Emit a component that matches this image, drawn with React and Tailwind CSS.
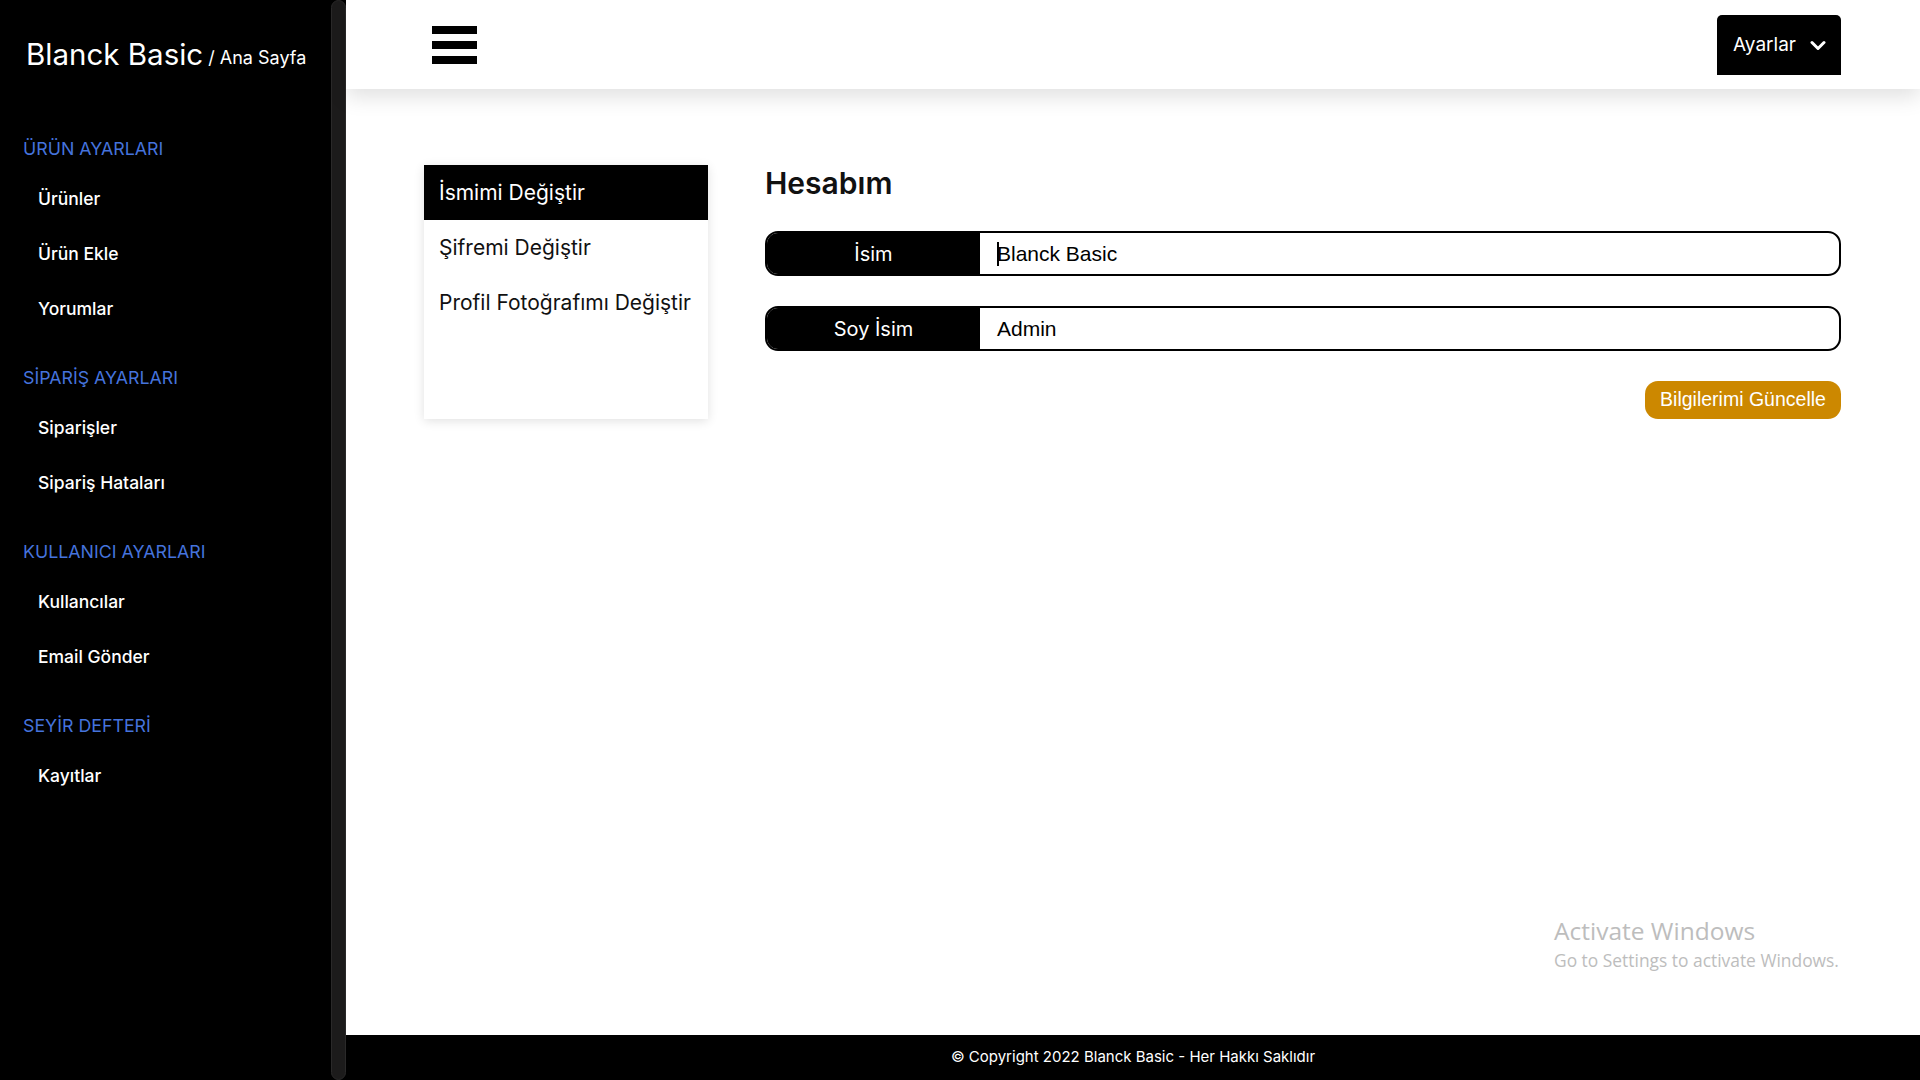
import React from "react";

const menu = [
  { title: "ÜRÜN AYARLARI", items: ["Ürünler", "Ürün Ekle", "Yorumlar"] },
  { title: "SİPARİŞ AYARLARI", items: ["Siparişler", "Sipariş Hataları"] },
  { title: "KULLANICI AYARLARI", items: ["Kullancılar", "Email Gönder"] },
  { title: "SEYİR DEFTERİ", items: ["Kayıtlar"] },
];

const tabs = ["İsmimi Değiştir", "Şifremi Değiştir", "Profil Fotoğrafımı Değiştir"];

const Sidebar = () => (
  <aside className="flex h-full w-[346px] shrink-0 bg-black">
    <div className="flex w-[331px] flex-col">
      <div className="flex h-[89px] items-center pl-[26px] pt-[20px] text-white">
        <span className="text-[29.5px] leading-none">Blanck Basic</span>
        <span className="ml-[5px] mt-[6px] text-[18px] leading-none">/ Ana Sayfa</span>
      </div>
      <nav className="mt-[37px] flex flex-col">
        {menu.map((group) => (
          <div key={group.title} className="mb-[18px]">
            <div className="flex h-[46px] items-center pl-[23px] text-[17.8px] text-[#4573dc]">
              {group.title}
            </div>
            {group.items.map((item) => (
              <div
                key={item}
                className="flex h-[55px] items-center pl-[38px] text-[17.5px] font-medium text-white"
              >
                {item}
              </div>
            ))}
          </div>
        ))}
      </nav>
    </div>
    <div className="h-full w-[15px] rounded-full border border-[#2a2929] bg-[#1c1b1b]" />
  </aside>
);

const Header = () => (
  <header className="relative z-10 flex h-[89px] shrink-0 items-center justify-between bg-white pl-[86px] pr-[79px] shadow-[0_8px_20px_rgba(0,0,0,0.12)]">
    <div className="flex w-[45px] flex-col gap-[7px]">
      <span className="h-[8px] bg-black" />
      <span className="h-[8px] bg-black" />
      <span className="h-[8px] bg-black" />
    </div>
    <button className="mt-[1px] flex h-[60px] w-[124px] items-center gap-[14px] rounded-t-[5px] bg-black pl-[16px] text-[19px] text-white">
      <span>Ayarlar</span>
      <svg width="16" height="11" viewBox="0 0 16 11" fill="none">
        <path d="M2 2.5 8 8.5 14 2.5" stroke="white" strokeWidth="3" strokeLinecap="round" strokeLinejoin="round" />
      </svg>
    </button>
  </header>
);

const Field = ({ label, value, caret }) => (
  <div className="flex h-[45px] overflow-hidden rounded-[13px] border-2 border-black">
    <div className="flex w-[213px] shrink-0 items-center justify-center bg-black text-[20px] text-white">
      {label}
    </div>
    <div className="flex flex-1 items-center pl-[17px] font-['Liberation_Sans',Arial,sans-serif] text-[21px] text-black">
      {caret && <span className="mr-[-2px] h-[24px] w-[2px] bg-black" />}
      {value}
    </div>
  </div>
);

export default function App() {
  return (
    <div className="relative flex h-screen w-full overflow-hidden bg-white font-['Inter',sans-serif]">
      <Sidebar />
      <div className="flex min-w-0 flex-1 flex-col">
        <Header />
        <main className="flex flex-1 gap-[57px] pl-[78px] pr-[79px] pt-[76px]">
          <div className="h-[254px] w-[284px] shrink-0 bg-white shadow-[0_2px_10px_rgba(0,0,0,0.12)]">
            {tabs.map((t, i) => (
              <div
                key={t}
                className={`flex h-[55px] items-center pl-[15px] text-[21px] ${
                  i === 0 ? "bg-black text-white" : "text-[#111]"
                }`}
              >
                {t}
              </div>
            ))}
          </div>
          <div className="flex flex-1 flex-col">
            <h1 className="h-[36px] text-[30px] font-semibold leading-[36px] text-[#111]">Hesabım</h1>
            <div className="mt-[30px] flex flex-col gap-[30px]">
              <Field label="İsim" value="Blanck Basic" caret />
              <Field label="Soy İsim" value="Admin" />
            </div>
            <div className="mt-[30px] flex justify-end">
              <button className="h-[38px] w-[196px] rounded-[13px] bg-[#cc8800] font-['Liberation_Sans',Arial,sans-serif] text-[19.5px] text-white">
                Bilgilerimi Güncelle
              </button>
            </div>
          </div>
        </main>
        <footer className="flex h-[45px] shrink-0 items-center justify-center bg-black text-[15px] text-white">
          © Copyright 2022 Blanck Basic - Her Hakkı Saklıdır
        </footer>
      </div>
      <div className="pointer-events-none absolute left-[1554px] top-[914px] font-['Open_Sans',sans-serif] text-[#bdbdbd]">
        <div className="text-[24.5px] leading-[34px]">Activate Windows</div>
        <div className="text-[17.4px] leading-[24px]">Go to Settings to activate Windows.</div>
      </div>
    </div>
  );
}
